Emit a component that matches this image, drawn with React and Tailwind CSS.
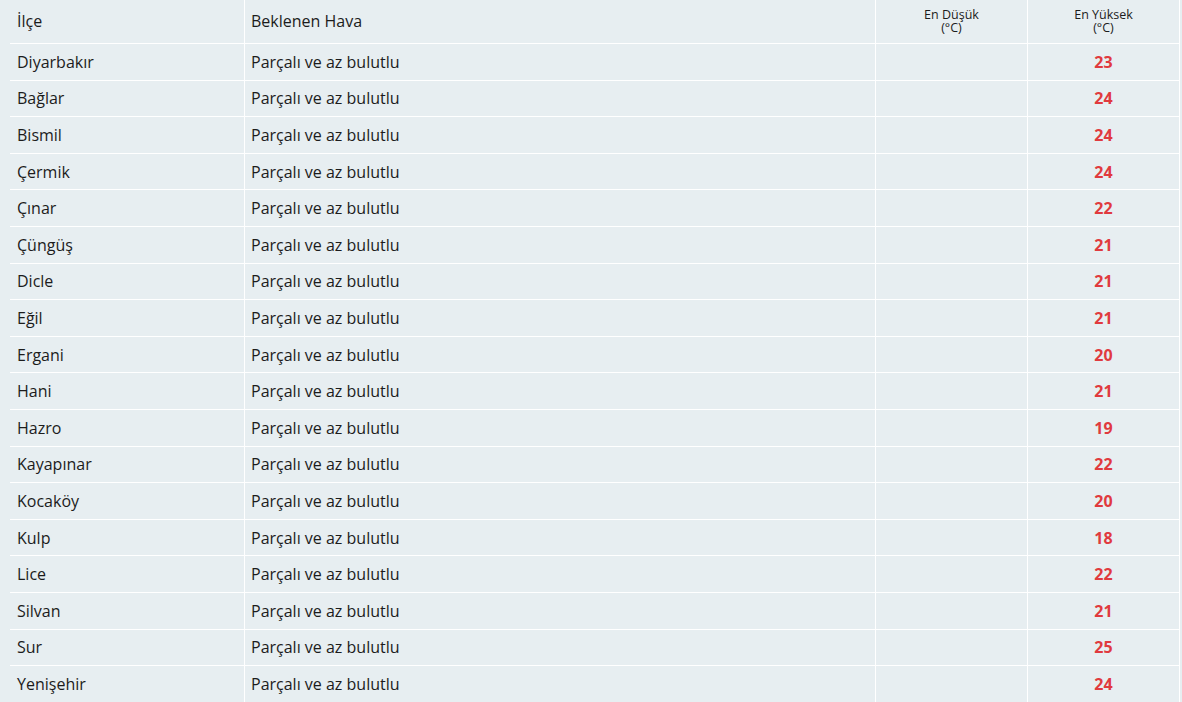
const rows = [
  ["Diyarbakır", 23],
  ["Bağlar", 24],
  ["Bismil", 24],
  ["Çermik", 24],
  ["Çınar", 22],
  ["Çüngüş", 21],
  ["Dicle", 21],
  ["Eğil", 21],
  ["Ergani", 20],
  ["Hani", 21],
  ["Hazro", 19],
  ["Kayapınar", 22],
  ["Kocaköy", 20],
  ["Kulp", 18],
  ["Lice", 22],
  ["Silvan", 21],
  ["Sur", 25],
  ["Yenişehir", 24],
];

export default function App() {
  return (
    <div
      className="w-[1182px] h-[702px] overflow-hidden bg-[#e7eef1] pl-[10px] text-[#1c1c1c]"
      style={{ fontFamily: '"Open Sans", "Noto Sans", sans-serif' }}
    >
      <div className="w-[1170px] border-r border-white">
        <div className="flex h-[44px] border-b border-white bg-[#e7eef1]">
          <div className="w-[234px] flex items-center pl-[7px] pb-[1px] text-[16px]">İlçe</div>
          <div className="w-[631px] flex items-center pl-[6px] pb-[1px] border-l border-white text-[16px]">Beklenen Hava</div>
          <div className="w-[152px] flex flex-col items-center pt-[8px] border-l border-white text-[12.5px] leading-[13px]">
            <span>En Düşük</span>
            <span>(°C)</span>
          </div>
          <div className="w-[152px] flex flex-col items-center pt-[8px] border-l border-white text-[12.5px] leading-[13px]">
            <span>En Yüksek</span>
            <span>(°C)</span>
          </div>
        </div>
        {rows.map(([name, max]) => (
          <div key={name} className="flex h-[36.6px] border-b border-white">
            <div className="w-[234px] flex items-center pl-[7px] text-[16px]">{name}</div>
            <div className="w-[631px] flex items-center pl-[6px] border-l border-white text-[16px]">
              Parçalı ve az bulutlu
            </div>
            <div className="w-[152px] border-l border-white"></div>
            <div className="w-[152px] flex items-center justify-center border-l border-white text-[16px] font-bold text-[#e03a3e]">
              {max}
            </div>
          </div>
        ))}
      </div>
    </div>
  );
}
